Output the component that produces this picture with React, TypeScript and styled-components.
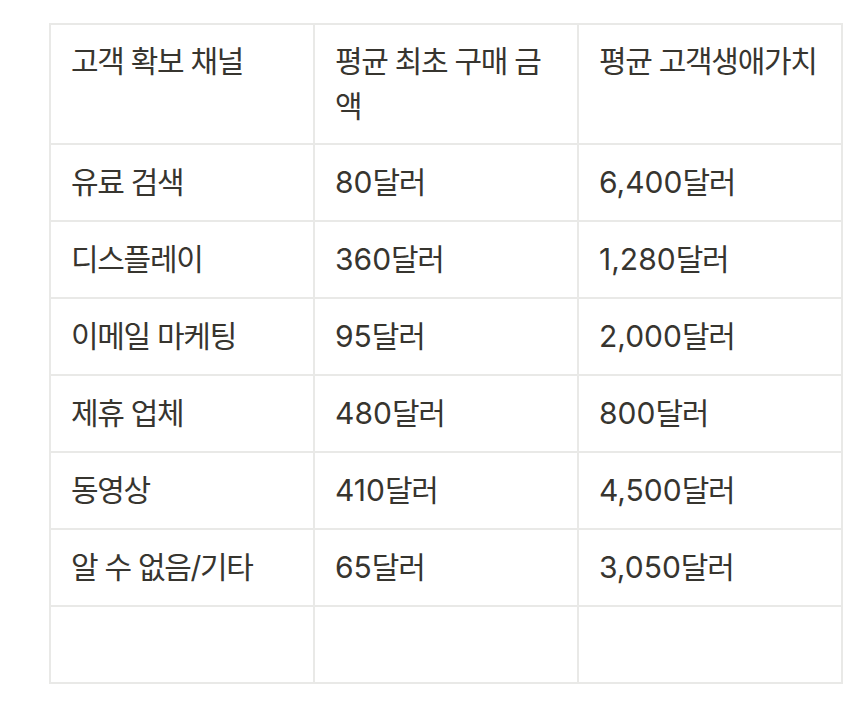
import React from "react";
import styled, { createGlobalStyle } from "styled-components";

const GlobalStyle = createGlobalStyle`
  html, body {
    margin: 0;
    padding: 0;
    background: #ffffff;
  }
  body {
    font-family: Inter, "Noto Sans CJK KR", sans-serif;
    color: #37352f;
  }
`;

const Page = styled.div`
  padding: 23px 13px 0 49px;
`;

const Table = styled.table`
  width: 794px;
  table-layout: fixed;
  border-collapse: collapse;
  font-family: Inter, "Noto Sans CJK KR", sans-serif;
  font-size: 30px;
  line-height: 45px;
  letter-spacing: -1.3px;
  color: #37352f;
`;

const HeadCell = styled.th`
  border: 2px solid #e9e9e7;
  padding: 14px 20px;
  text-align: left;
  vertical-align: top;
  font-weight: 400;
`;

const Cell = styled.td`
  border: 2px solid #e9e9e7;
  padding: 15px 20px;
  text-align: left;
  vertical-align: top;
  font-weight: 400;
`;

const Num = styled.span`
  font-family: Inter, sans-serif;
  letter-spacing: 0;
`;

type Row = { channel: string; first: string; ltv: string };

const rows: Row[] = [
  { channel: "유료 검색", first: "80", ltv: "6,400" },
  { channel: "디스플레이", first: "360", ltv: "1,280" },
  { channel: "이메일 마케팅", first: "95", ltv: "2,000" },
  { channel: "제휴 업체", first: "480", ltv: "800" },
  { channel: "동영상", first: "410", ltv: "4,500" },
  { channel: "알 수 없음/기타", first: "65", ltv: "3,050" },
];

const Dollar = ({ value }: { value: string }) => (
  <>
    <Num>{value}</Num>달러
  </>
);

export default function App() {
  return (
    <>
      <GlobalStyle />
      <Page>
        <Table>
          <thead>
            <tr>
              <HeadCell>고객 확보 채널</HeadCell>
              <HeadCell>평균 최초 구매 금액</HeadCell>
              <HeadCell>평균 고객생애가치</HeadCell>
            </tr>
          </thead>
          <tbody>
            {rows.map((r) => (
              <tr key={r.channel}>
                <Cell>{r.channel}</Cell>
                <Cell>
                  <Dollar value={r.first} />
                </Cell>
                <Cell>
                  <Dollar value={r.ltv} />
                </Cell>
              </tr>
            ))}
            <tr>
              <Cell>{"\u00a0"}</Cell>
              <Cell>{"\u00a0"}</Cell>
              <Cell>{"\u00a0"}</Cell>
            </tr>
          </tbody>
        </Table>
      </Page>
    </>
  );
}
